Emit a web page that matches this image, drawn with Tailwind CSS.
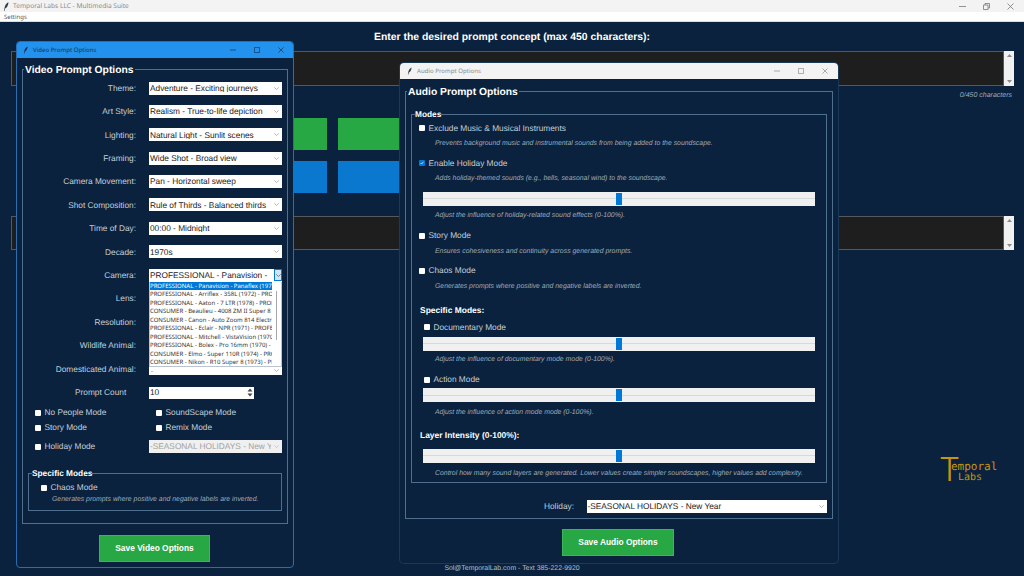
<!DOCTYPE html>
<html lang="en">
<head>
  <meta charset="UTF-8" />
  <title>Temporal Labs LLC - Multimedia Suite</title>
  <script src="https://cdn.jsdelivr.net/npm/@tailwindcss/browser@4"></script>
</head>
<body class="relative w-[1024px] h-[576px] overflow-hidden bg-[#0a223e] font-['Liberation_Sans',Arial,sans-serif] [text-rendering:geometricPrecision]">

  <!-- App title bar -->
  <div class="h-[12px] bg-[#f3f3f3] flex items-center pl-[3px] text-[#8a8a8a] text-[6.6px] font-['Noto_Sans',sans-serif]">
    <svg class="w-[6px] h-[9px] mr-[4px]" viewBox="0 0 6 9"><path d="M5.5 0.2C3.5 1 2 3 1.6 5.5L1 8.8l.6.1.5-2.3C4 6 5.4 3 5.5.2z" fill="#33404d"/></svg>
    <span>Temporal Labs LLC - Multimedia Suite</span>
    <div class="ml-auto flex gap-[17px] pr-[10px] items-center">
      <svg class="w-[7px] h-[7px]" viewBox="0 0 7 7"><path d="M0 3.5h7" stroke="#777" stroke-width=".8"/></svg>
      <svg class="w-[7px] h-[7px]" viewBox="0 0 7 7" fill="none" stroke="#777" stroke-width=".8"><path d="M.5 2h4.5v4.5H.5zM2 2V.5h4.5V5H5"/></svg>
      <svg class="w-[7px] h-[7px]" viewBox="0 0 7 7"><path d="M.5.5l6 6M6.5.5l-6 6" stroke="#777" stroke-width=".8"/></svg>
    </div>
  </div>
  <div class="h-[10px] bg-white border-b border-[#d5dde5] pl-[4px] text-[#555] text-[6px] leading-[10px] font-['Noto_Sans',sans-serif]">Settings</div>

  <!-- Main page behind the dialogs -->
  <main class="flex flex-col h-[554px]">
    <h1 class="mt-[10px] h-[12px] leading-[12px] text-center text-white font-bold text-[10.4px]">Enter the desired prompt concept (max 450 characters):</h1>

    <div class="mt-[7px] ml-[11px] w-[1003px] h-[35px] flex">
      <div class="flex-1 bg-[#1e1e1e] border-[1.5px] border-[#55585c]"></div>
      <div class="w-[10px] bg-[#f1f1f1] flex flex-col items-center justify-between py-[3px]">
        <svg class="w-[5px] h-[3px]" viewBox="0 0 5 3"><path d="M2.5 0L5 3H0z" fill="#8a8a8a"/></svg>
        <svg class="w-[5px] h-[3px]" viewBox="0 0 5 3"><path d="M2.5 3L5 0H0z" fill="#8a8a8a"/></svg>
      </div>
    </div>
    <div class="mt-[5px] pr-[12px] h-[10px] leading-[10px] text-right italic text-[7px] text-[#a0acb8]">0/450 characters</div>

    <div class="mt-[17px] ml-[200px] flex gap-[11px]">
      <div class="w-[127px] h-[32px] bg-[#28a745]"></div>
      <div class="w-[127px] h-[32px] bg-[#28a745]"></div>
    </div>
    <div class="mt-[11px] ml-[200px] flex gap-[11px]">
      <div class="w-[127px] h-[32px] bg-[#0b78d0]"></div>
      <div class="w-[127px] h-[32px] bg-[#0b78d0]"></div>
    </div>

    <div class="mt-[23px] ml-[11px] w-[1003px] h-[34px] flex">
      <div class="flex-1 bg-[#1e1e1e] border-[1.5px] border-[#55585c]"></div>
      <div class="w-[10px] bg-[#f1f1f1] flex flex-col items-center justify-between py-[3px]">
        <svg class="w-[5px] h-[3px]" viewBox="0 0 5 3"><path d="M2.5 0L5 3H0z" fill="#8a8a8a"/></svg>
        <svg class="w-[5px] h-[3px]" viewBox="0 0 5 3"><path d="M2.5 3L5 0H0z" fill="#8a8a8a"/></svg>
      </div>
    </div>

    <!-- Logo -->
    <div class="mt-[205px] self-end mr-[27px] w-[58px] h-[28px] flex text-[#c8940f]">
      <span class="w-[12px] text-[33px] leading-[28px] font-light font-['Inter',sans-serif]">T</span>
      <div class="flex flex-col pt-[5px] font-['DejaVu_Sans_Mono',monospace]">
        <span class="text-[11px] leading-[13px]">emporal</span>
        <span class="text-[10px] leading-[10px] ml-[7px]">Labs</span>
      </div>
    </div>

    <div class="mt-auto mb-[4px] h-[10px] leading-[10px] text-center text-[6.9px] text-[#b3c0cc] translate-y-[2px]">Sol@TemporalLab.com - Text 385-222-9920</div>
  </main>

  <!-- Video Prompt Options window -->
  <section class="absolute left-[16px] top-[41px] w-[278px] h-[527px] bg-[#0a223e] border border-[#2a6db0] rounded-[4px] overflow-hidden">
    <div class="h-[16px] bg-[#2391ee] flex items-center pl-[6px] text-[#12345a] text-[6.1px] font-['Noto_Sans',sans-serif]">
      <svg class="w-[5px] h-[8px] mr-[5px]" viewBox="0 0 6 9"><path d="M5.5 0.2C3.5 1 2 3 1.6 5.5L1 8.8l.6.1.5-2.3C4 6 5.4 3 5.5.2z" fill="#17324f"/></svg>
      <span>Video Prompt Options</span>
      <div class="ml-auto flex gap-[18px] pr-[9px] items-center">
        <svg class="w-[6px] h-[6px]" viewBox="0 0 7 7"><path d="M0 3.5h7" stroke="#17324f" stroke-width=".8"/></svg>
        <svg class="w-[6px] h-[6px]" viewBox="0 0 7 7"><path d="M.5.5h6v6h-6z" fill="none" stroke="#17324f" stroke-width=".8"/></svg>
        <svg class="w-[6px] h-[6px]" viewBox="0 0 7 7"><path d="M.5.5l6 6M6.5.5l-6 6" stroke="#17324f" stroke-width=".8"/></svg>
      </div>
    </div>

    <fieldset class="mx-[5px] mt-[3px] h-[463px] border border-[#4f6f8f] pl-[6px] pr-[5px]">
      <legend class="ml-[-5px] px-[1px] h-[16px] leading-[19px] text-white font-bold text-[10.3px]">Video Prompt Options</legend>

      <div class="mt-[4.5px] grid grid-cols-[107px_133px] gap-x-[13px] gap-y-[10.4px] items-center text-[8.3px] leading-none text-[#c5ced6] text-right">
        <span>Theme:</span>
        <div class="h-[13px] bg-white flex items-center pl-[1px] pr-[3px] text-[#222] text-left"><span class="flex-1 truncate">Adventure - Exciting journeys</span><svg class="w-[5px] h-[3px]" viewBox="0 0 5 3"><path d="M.3.3l2.2 2.2L4.7.3" fill="none" stroke="#999" stroke-width=".7"/></svg></div>
        <span>Art Style:</span>
        <div class="h-[13px] bg-white flex items-center pl-[1px] pr-[3px] text-[#222] text-left"><span class="flex-1 truncate">Realism - True-to-life depiction</span><svg class="w-[5px] h-[3px]" viewBox="0 0 5 3"><path d="M.3.3l2.2 2.2L4.7.3" fill="none" stroke="#999" stroke-width=".7"/></svg></div>
        <span>Lighting:</span>
        <div class="h-[13px] bg-white flex items-center pl-[1px] pr-[3px] text-[#222] text-left"><span class="flex-1 truncate">Natural Light - Sunlit scenes</span><svg class="w-[5px] h-[3px]" viewBox="0 0 5 3"><path d="M.3.3l2.2 2.2L4.7.3" fill="none" stroke="#999" stroke-width=".7"/></svg></div>
        <span>Framing:</span>
        <div class="h-[13px] bg-white flex items-center pl-[1px] pr-[3px] text-[#222] text-left"><span class="flex-1 truncate">Wide Shot - Broad view</span><svg class="w-[5px] h-[3px]" viewBox="0 0 5 3"><path d="M.3.3l2.2 2.2L4.7.3" fill="none" stroke="#999" stroke-width=".7"/></svg></div>
        <span>Camera Movement:</span>
        <div class="h-[13px] bg-white flex items-center pl-[1px] pr-[3px] text-[#222] text-left"><span class="flex-1 truncate">Pan - Horizontal sweep</span><svg class="w-[5px] h-[3px]" viewBox="0 0 5 3"><path d="M.3.3l2.2 2.2L4.7.3" fill="none" stroke="#999" stroke-width=".7"/></svg></div>
        <span>Shot Composition:</span>
        <div class="h-[13px] bg-white flex items-center pl-[1px] pr-[3px] text-[#222] text-left"><span class="flex-1 truncate">Rule of Thirds - Balanced thirds</span><svg class="w-[5px] h-[3px]" viewBox="0 0 5 3"><path d="M.3.3l2.2 2.2L4.7.3" fill="none" stroke="#999" stroke-width=".7"/></svg></div>
        <span>Time of Day:</span>
        <div class="h-[13px] bg-white flex items-center pl-[1px] pr-[3px] text-[#222] text-left"><span class="flex-1 truncate">00:00 - Midnight</span><svg class="w-[5px] h-[3px]" viewBox="0 0 5 3"><path d="M.3.3l2.2 2.2L4.7.3" fill="none" stroke="#999" stroke-width=".7"/></svg></div>
        <span>Decade:</span>
        <div class="h-[13px] bg-white flex items-center pl-[1px] pr-[3px] text-[#222] text-left"><span class="flex-1 truncate">1970s</span><svg class="w-[5px] h-[3px]" viewBox="0 0 5 3"><path d="M.3.3l2.2 2.2L4.7.3" fill="none" stroke="#999" stroke-width=".7"/></svg></div>

        <span>Camera:</span>
        <div class="relative h-[13px] bg-white flex items-center pl-[1px] text-[#222] text-left">
          <span class="flex-1 truncate">PROFESSIONAL - Panavision -</span>
          <div class="w-[8px] h-[12px] bg-[#cfe6f8] border border-[#0078d7] flex items-center justify-center"><svg class="w-[5px] h-[3px]" viewBox="0 0 5 3"><path d="M.3.3l2.2 2.2L4.7.3" fill="none" stroke="#555" stroke-width=".7"/></svg></div>
          <!-- open dropdown list -->
          <div class="absolute z-10 left-0 top-[13px] w-[133px] h-[93px] bg-white flex flex-col font-['Noto_Sans',sans-serif] text-[6px] leading-[8.5px] text-[#333]">
            <div class="h-[85px] border-x border-b border-[#b9c4cf] flex">
              <ul class="w-[122px] whitespace-nowrap overflow-hidden">
                <li class="h-[8.5px] bg-[#0078d7] text-white overflow-hidden">PROFESSIONAL - Panavision - Panaflex (1972) - PRO</li>
                <li class="h-[8.5px] overflow-hidden">PROFESSIONAL - Arriflex - 358L (1972) - PROFESSIONAL</li>
                <li class="h-[8.5px] overflow-hidden">PROFESSIONAL - Aaton - 7 LTR (1978) - PROFESSIONAL</li>
                <li class="h-[8.5px] overflow-hidden">CONSUMER - Beaulieu - 4008 ZM II Super 8 - CONSUMER</li>
                <li class="h-[8.5px] overflow-hidden">CONSUMER - Canon - Auto Zoom 814 Electronic</li>
                <li class="h-[8.5px] overflow-hidden">PROFESSIONAL - Eclair - NPR (1971) - PROFESSIONAL</li>
                <li class="h-[8.5px] overflow-hidden">PROFESSIONAL - Mitchell - VistaVision (1970) - PRO</li>
                <li class="h-[8.5px] overflow-hidden">PROFESSIONAL - Bolex - Pro 16mm (1970) - PROFESSIONAL</li>
                <li class="h-[8.5px] overflow-hidden">CONSUMER - Elmo - Super 110R (1974) - PROFESSIONAL</li>
                <li class="h-[8.5px] overflow-hidden">CONSUMER - Nikon - R10 Super 8 (1973) - PROFESSIONAL</li>
              </ul>
              <div class="flex-1 flex justify-center pt-[9px]"><div class="w-[1.5px] h-[49px] bg-[#a8a8a8]"></div></div>
            </div>
            <div class="flex-1 flex items-start justify-between pl-[2px] pr-[3px] pt-[2px] text-[#555]"><span class="leading-[4px]">-</span><svg class="w-[5px] h-[3px]" viewBox="0 0 5 3"><path d="M.3.3l2.2 2.2L4.7.3" fill="none" stroke="#999" stroke-width=".7"/></svg></div>
          </div>
        </div>

        <span>Lens:</span><div class="h-[13px]"></div>
        <span>Resolution:</span><div class="h-[13px]"></div>
        <span>Wildlife Animal:</span><div class="h-[13px]"></div>
        <span>Domesticated Animal:</span><div class="h-[13px]"></div>
      </div>

      <!-- Prompt count -->
      <div class="mt-[11.5px] flex items-center h-[12px] text-[8.3px] text-[#c5ced6]">
        <span class="ml-[46px] w-[74px]">Prompt Count</span>
        <div class="w-[105px] h-[12px] bg-white flex items-center justify-between pl-[1px] text-[#222]">
          <span>10</span>
          <svg class="w-[6px] h-[9px] mr-[1px]" viewBox="0 0 6 9"><path d="M3 .5L5.5 3.5H.5zM3 8.5L5.5 5.5H.5z" fill="#444"/></svg>
        </div>
      </div>

      <div class="mt-[8.5px] grid grid-cols-[121px_120px] gap-y-[4px] text-[8.3px] text-[#c5ced6] pl-[6px]">
        <label class="h-[11px] flex items-center gap-[3.5px]"><span class="w-[6px] h-[6px] bg-white rounded-[1px]"></span>No People Mode</label>
        <label class="h-[11px] flex items-center gap-[3.5px]"><span class="w-[6px] h-[6px] bg-white rounded-[1px]"></span>SoundScape Mode</label>
        <label class="h-[11px] flex items-center gap-[3.5px]"><span class="w-[6px] h-[6px] bg-white rounded-[1px]"></span>Story Mode</label>
        <label class="h-[11px] flex items-center gap-[3.5px]"><span class="w-[6px] h-[6px] bg-white rounded-[1px]"></span>Remix Mode</label>
      </div>

      <div class="mt-[7px] h-[13px] flex items-center text-[8.3px] text-[#c5ced6] pl-[6px]">
        <label class="w-[114px] flex items-center gap-[3.5px]"><span class="w-[6px] h-[6px] bg-white rounded-[1px]"></span>Holiday Mode</label>
        <div class="w-[133px] h-[13px] bg-[#f0f0f0] flex items-center pl-[1px] pr-[3px] text-[#a2a2a2]"><span class="flex-1 overflow-hidden whitespace-nowrap w-[120px]">-SEASONAL HOLIDAYS - New Year</span><svg class="w-[5px] h-[3px] ml-[3px] shrink-0" viewBox="0 0 5 3"><path d="M.3.3l2.2 2.2L4.7.3" fill="none" stroke="#bbb" stroke-width=".7"/></svg></div>
      </div>

      <fieldset class="mt-[14px] -ml-[1px] w-[254px] h-[44px] border border-[#4f6f8f]">
        <legend class="ml-[3px] h-[12px] leading-[13px] text-white font-bold text-[8.3px]">Specific Modes</legend>
        <label class="mt-[3px] ml-[12px] h-[11px] flex items-center gap-[3.5px] text-[8.3px] text-[#c5ced6]"><span class="w-[6px] h-[6px] bg-white rounded-[1px]"></span>Chaos Mode</label>
        <p class="mt-[2px] ml-[23px] h-[10px] leading-[10px] italic text-[6.9px] text-[#a0acb8] whitespace-nowrap">Generates prompts where positive and negative labels are inverted.</p>
      </fieldset>
    </fieldset>

    <button class="block ml-[82px] mt-[11px] w-[111px] h-[27px] bg-[#28a745] border border-[#3cb45a] text-white font-bold text-[8.4px]">Save Video Options</button>
  </section>

  <!-- Audio Prompt Options window -->
  <section class="absolute left-[400px] top-[63px] w-[438px] h-[500px] bg-[#0a223e] ring-1 ring-[#1b3a5a] rounded-[4px] overflow-hidden">
    <div class="h-[16px] bg-[#f3f3f3] flex items-center pl-[7px] text-[#8a8a8a] text-[6.1px] font-['Noto_Sans',sans-serif]">
      <svg class="w-[5px] h-[8px] mr-[5px]" viewBox="0 0 6 9"><path d="M5.5 0.2C3.5 1 2 3 1.6 5.5L1 8.8l.6.1.5-2.3C4 6 5.4 3 5.5.2z" fill="#33404d"/></svg>
      <span>Audio Prompt Options</span>
      <div class="ml-auto flex gap-[18px] pr-[10px] items-center">
        <svg class="w-[6px] h-[6px]" viewBox="0 0 7 7"><path d="M0 3.5h7" stroke="#888" stroke-width=".8"/></svg>
        <svg class="w-[6px] h-[6px]" viewBox="0 0 7 7"><path d="M.5.5h6v6h-6z" fill="none" stroke="#888" stroke-width=".8"/></svg>
        <svg class="w-[6px] h-[6px]" viewBox="0 0 7 7"><path d="M.5.5l6 6M6.5.5l-6 6" stroke="#888" stroke-width=".8"/></svg>
      </div>
    </div>

    <fieldset class="ml-[5px] mt-[4px] w-[428px] h-[436px] border border-[#4f6f8f] px-[5px]">
      <legend class="ml-[-4px] px-[1px] h-[16px] leading-[19px] text-white font-bold text-[10.3px]">Audio Prompt Options</legend>

      <fieldset class="mt-[9px] w-[416px] h-[375px] border border-[#4f6f8f] text-[8.3px] text-[#c5ced6]">
        <legend class="ml-[3px] h-[12px] leading-[12px] text-white font-bold text-[8.3px]">Modes</legend>

        <label class="mt-[1px] ml-[7px] h-[14px] flex items-center gap-[3.5px]"><span class="w-[6px] h-[6px] bg-white rounded-[1px]"></span>Exclude Music &amp; Musical Instruments</label>
        <p class="mt-[4px] ml-[23px] h-[10px] leading-[10px] italic text-[6.9px] text-[#a0acb8]">Prevents background music and instrumental sounds from being added to the soundscape.</p>

        <label class="mt-[7px] ml-[7px] h-[14px] flex items-center gap-[3.5px]"><span class="w-[6px] h-[6px] bg-[#0078d7] rounded-[1px] flex items-center justify-center"><svg class="w-[4px] h-[4px]" viewBox="0 0 4 4"><path d="M.5 2l1 1 2-2.2" fill="none" stroke="#fff" stroke-width=".7"/></svg></span>Enable Holiday Mode</label>
        <p class="mt-[4px] ml-[23px] h-[10px] leading-[10px] italic text-[6.9px] text-[#a0acb8]">Adds holiday-themed sounds (e.g., bells, seasonal wind) to the soundscape.</p>
        <div class="relative mt-[7.5px] ml-[11px] w-[392px] h-[14px] bg-[#f0f0f0] flex items-center"><div class="w-full h-[1px] bg-[#d9d9d9]"></div><span class="absolute left-[193px] top-[1px] w-[6px] h-[12px] bg-[#0078d7]"></span></div>
        <p class="mt-[5.5px] ml-[23px] h-[10px] leading-[10px] italic text-[6.9px] text-[#a0acb8]">Adjust the influence of holiday-related sound effects (0-100%).</p>

        <label class="mt-[7.5px] ml-[7px] h-[14px] flex items-center gap-[3.5px]"><span class="w-[6px] h-[6px] bg-white rounded-[1px]"></span>Story Mode</label>
        <p class="mt-[4px] ml-[23px] h-[10px] leading-[10px] italic text-[6.9px] text-[#a0acb8]">Ensures cohesiveness and continuity across generated prompts.</p>

        <label class="mt-[7px] ml-[7px] h-[14px] flex items-center gap-[3.5px]"><span class="w-[6px] h-[6px] bg-white rounded-[1px]"></span>Chaos Mode</label>
        <p class="mt-[4px] ml-[23px] h-[10px] leading-[10px] italic text-[6.9px] text-[#a0acb8]">Generates prompts where positive and negative labels are inverted.</p>

        <h3 class="mt-[12px] ml-[8px] h-[13px] leading-[13px] text-white font-bold text-[8.45px]">Specific Modes:</h3>

        <label class="mt-[3.5px] ml-[12px] h-[14px] flex items-center gap-[3.5px]"><span class="w-[6px] h-[6px] bg-white rounded-[1px]"></span>Documentary Mode</label>
        <div class="relative mt-[2.5px] ml-[11px] w-[392px] h-[14px] bg-[#f0f0f0] flex items-center"><div class="w-full h-[1px] bg-[#d9d9d9]"></div><span class="absolute left-[193px] top-[1px] w-[6px] h-[12px] bg-[#0078d7]"></span></div>
        <p class="mt-[4.5px] ml-[23px] h-[10px] leading-[10px] italic text-[6.9px] text-[#a0acb8]">Adjust the influence of documentary mode mode (0-100%).</p>

        <label class="mt-[7.5px] ml-[12px] h-[14px] flex items-center gap-[3.5px]"><span class="w-[6px] h-[6px] bg-white rounded-[1px]"></span>Action Mode</label>
        <div class="relative mt-[1.5px] ml-[11px] w-[392px] h-[14px] bg-[#f0f0f0] flex items-center"><div class="w-full h-[1px] bg-[#d9d9d9]"></div><span class="absolute left-[193px] top-[1px] w-[6px] h-[12px] bg-[#0078d7]"></span></div>
        <p class="mt-[6px] ml-[23px] h-[10px] leading-[10px] italic text-[6.9px] text-[#a0acb8]">Adjust the influence of action mode mode (0-100%).</p>

        <h3 class="mt-[10.5px] ml-[8px] h-[13px] leading-[13px] text-white font-bold text-[8.45px]">Layer Intensity (0-100%):</h3>
        <div class="relative mt-[7px] ml-[11px] w-[392px] h-[14px] bg-[#f0f0f0] flex items-center"><div class="w-full h-[1px] bg-[#d9d9d9]"></div><span class="absolute left-[193px] top-[1px] w-[6px] h-[12px] bg-[#0078d7]"></span></div>
        <p class="mt-[6px] ml-[23px] h-[10px] leading-[10px] italic text-[6.9px] text-[#a0acb8]">Control how many sound layers are generated. Lower values create simpler soundscapes, higher values add complexity.</p>
      </fieldset>

      <div class="mt-[17px] flex items-center h-[13px] text-[8.3px] text-[#c5ced6]">
        <span class="ml-[133px] w-[42.5px]">Holiday:</span>
        <div class="w-[240px] h-[13px] bg-white flex items-center pl-[1px] pr-[3px] text-[#222]"><span class="flex-1">-SEASONAL HOLIDAYS - New Year</span><svg class="w-[5px] h-[3px]" viewBox="0 0 5 3"><path d="M.3.3l2.2 2.2L4.7.3" fill="none" stroke="#999" stroke-width=".7"/></svg></div>
      </div>
    </fieldset>

    <button class="block ml-[162px] mt-[10px] w-[112px] h-[27px] bg-[#28a745] border border-[#3cb45a] text-white font-bold text-[8.4px]">Save Audio Options</button>
  </section>
</body>
</html>
